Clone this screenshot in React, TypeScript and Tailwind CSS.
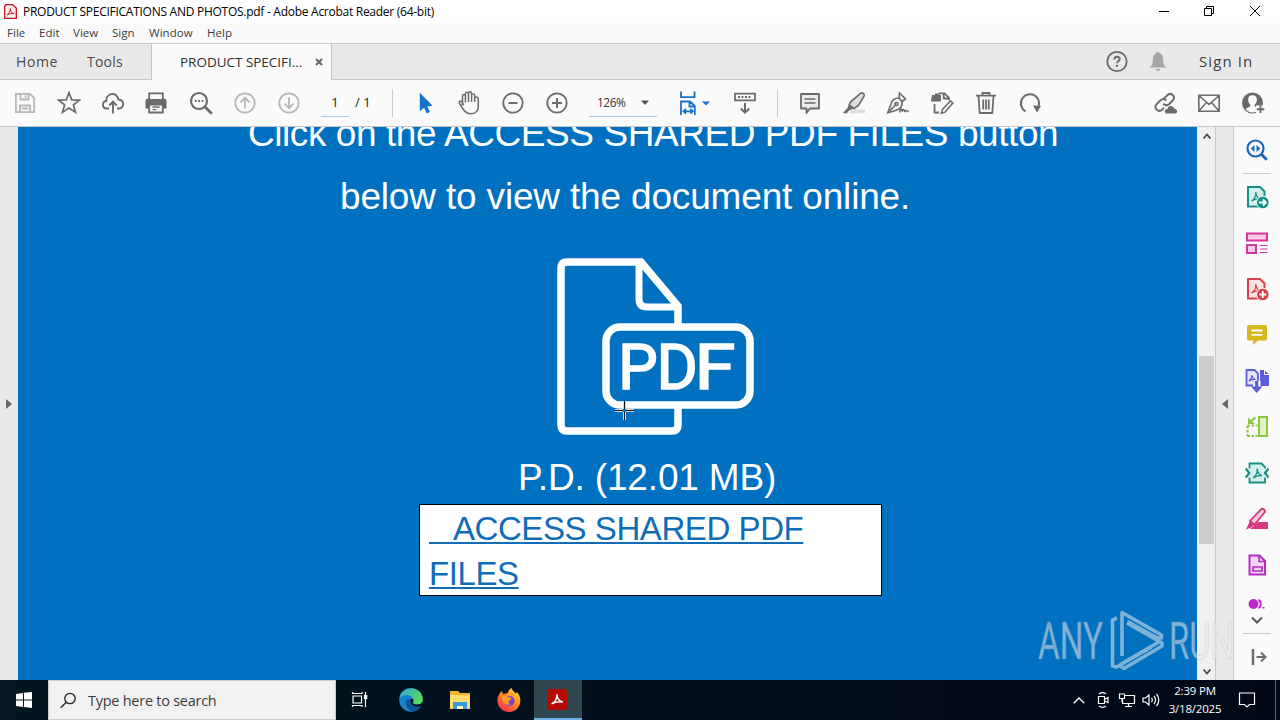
import type { ReactNode } from "react";

import clsx from "clsx";

const GREY = "#6b6b6b";
const PALE = "#b7b7b7";
const BLUE = "#1473c8";

interface IconProps {
  children: ReactNode;
  size?: number;
  color?: string;
  width?: number;
  className?: string;
}

/// Outline icon on a 24px grid. Shapes that need a solid fill set it themselves.
function Icon({ children, size = 24, color = GREY, width = 1.8, className }: IconProps) {
  return (
    <svg
      width={size}
      height={size}
      viewBox="0 0 24 24"
      fill="none"
      stroke={color}
      strokeWidth={width}
      className={clsx("block shrink-0", className)}
    >
      {children}
    </svg>
  );
}

function Cell({ children }: { children: ReactNode }) {
  return <button className="flex h-full w-11 shrink-0 items-center justify-center">{children}</button>;
}

function AcrobatMark({ color, fill }: { color: string; fill: string }) {
  return (
    <>
      <path d="M3 2h12l4.500 4.500V21.500H3z" fill={fill} strokeWidth="2" />
      <path
        d="M6.500 16c2.500-1.500 4.500-5 4.300-9 .2 4 2 6.300 5 7-3.500-.5-6.500.3-9.300 2z"
        stroke={color}
        strokeWidth="1.200"
      />
    </>
  );
}

function TitleBar() {
  return (
    <div className="flex h-[23px] items-center bg-white">
      <svg width="13" height="15" viewBox="0 0 13 15" className="ml-1 shrink-0" fill="none">
        <path d="M2 .7h6.500L12.300 4v10.300H.7V2z" fill="#fff0f0" stroke="#c4161c" strokeWidth="1.300" />
        <path d="M3 11c1.800-1 3.300-3.600 3.300-6.500C6.500 7.600 8 9.200 10.300 9.600 7.800 9.300 5.300 9.700 3 11z" stroke="#c4161c" />
      </svg>
      <span className="ml-1.5 text-[12px] tracking-[-0.27px] whitespace-nowrap text-black">
        PRODUCT SPECIFICATIONS AND PHOTOS.pdf - Adobe Acrobat Reader (64-bit)
      </span>
      <div className="ml-auto flex items-center">
        <svg width="12" height="12" viewBox="0 0 12 12" stroke="#000" fill="none" className="mr-[33px] mb-0.5">
          <path d="M1 6.500h10" />
        </svg>
        <svg width="12" height="12" viewBox="0 0 12 12" stroke="#000" fill="none" className="mr-[34px] mb-0.5">
          <path d="M1.500 3.500h7v7h-7zM3.500 3.500v-2h7v7h-2" />
        </svg>
        <svg width="12" height="12" viewBox="0 0 12 12" stroke="#000" fill="none" className="mr-[19px] mb-0.5">
          <path d="M1 1l10 10M11 1L1 11" />
        </svg>
      </div>
    </div>
  );
}

function MenuBar() {
  return (
    <div className="flex h-5 items-center bg-[#fafafa] text-[11.500px] tracking-[0.02px] text-[#3c3c3c]">
      <span className="ml-[7px] w-8">File</span>
      <span className="w-[34px]">Edit</span>
      <span className="w-[39px]">View</span>
      <span className="w-[37px]">Sign</span>
      <span className="w-[58px]">Window</span>
      <span>Help</span>
    </div>
  );
}

function TabBar() {
  return (
    <div className="flex h-[37px] border-y border-[#c6c6c6] bg-[#e9e9e9] text-[14px] text-[#4a4a4a]">
      <div className="flex w-[151px] items-center">
        <span className="ml-4 w-[71px] tracking-[0.600px]">Home</span>
        <span className="tracking-[0.200px]">Tools</span>
      </div>
      <div className="-mb-px flex w-[181px] items-center border-x border-[#c6c6c6] bg-[#fafafa]">
        <span className="ml-7 text-[13.500px] tracking-[-0.02px] whitespace-nowrap text-[#2f2f2f]">
          PRODUCT SPECIFI...
        </span>
        <svg width="8" height="8" viewBox="0 0 8 8" stroke="#666" strokeWidth="2" className="mr-2 ml-auto">
          <path d="M1 1l6 6M7 1L1 7" />
        </svg>
      </div>
      <div className="ml-auto flex items-center pr-[25px]">
        <Icon>
          <circle cx="12" cy="11.500" r="9.700" />
          <path d="M9.300 9.500c0-3.600 5.400-3.500 5.400-.4 0 2-2.600 1.900-2.600 4.200" strokeWidth="2" />
          <path d="M12 14.800v2" strokeWidth="2.200" />
        </Icon>
        <Icon className="ml-[17px]" color="#a6a6a6">
          <path
            d="M12 2c1 0 1.400.6 1.400 1.300 2.500.7 3.700 2.600 3.700 5.200 0 5 1 7.300 3.400 9H3.500C6 15.800 6.900 13.500 6.900 8.500c0-2.600 1.200-4.500 3.700-5.200 0-.7.4-1.300 1.400-1.300zM9.800 19h4.400c0 1.300-1 2-2.200 2s-2.200-.7-2.200-2z"
            fill="#a6a6a6"
            stroke="none"
          />
        </Icon>
        <span className="ml-[29px] w-14 text-[15px] tracking-[1.100px] whitespace-nowrap text-[#3c3c3c]">Sign In</span>
      </div>
    </div>
  );
}

function Toolbar() {
  return (
    <div className="flex h-[47px] items-center border-b border-[#c6c6c6] bg-[#fafafa] pl-[3px]">
      <Cell>
        <Icon color={PALE}>
          <path d="M2.900 2.900h14L21.200 7v14.100H2.900zM7.500 3v5.500h8V3M12.500 4.500v2.500M7 21v-6.500h10V21M9 17.500h6" />
        </Icon>
      </Cell>
      <Cell>
        <Icon width={1.7}>
          <path d="M12 1.500l2.700 7.300 7.800.3-6.100 4.800 2.100 7.500-6.500-4.300-6.500 4.300 2.100-7.500L1.500 9.100l7.800-.3z" />
        </Icon>
      </Cell>
      <Cell>
        <Icon width={1.9}>
          <path d="M8 17.500H5.500C.8 17.300.8 10.500 5.300 10 5 1.500 16.500.5 17.300 8.500c6.300.5 6.300 8.700.7 9H16" />
          <path d="M12 22.500V11M8.300 14.500l3.700-3.800 3.700 3.800" />
        </Icon>
      </Cell>
      <Cell>
        <Icon className="-ml-0.5">
          <path d="M5 7V2h14v5M1.500 9l1.800-1.500h17.400L22.500 9v8.500H19V14H5v3.500H1.500z" fill={GREY} stroke="none" />
          <path d="M5.200 8V2.300h13.600V8" fill="#fafafa" />
          <path d="M5.200 13.500v8h13.600v-8z" fill="#fafafa" />
          <path d="M8.500 16h7M8.500 18.700h4" strokeWidth="1.300" />
        </Icon>
      </Cell>
      <Cell>
        <Icon>
          <circle cx="10" cy="10" r="8" strokeWidth="2.200" />
          <path d="M15.800 15.800l7 7" strokeWidth="2.800" />
          <path d="M5.800 10h1.800M9.200 10H11M12.600 10h1.800" strokeWidth="2" />
        </Icon>
      </Cell>
      <Cell>
        <Icon color={PALE}>
          <circle cx="12" cy="12" r="9.700" />
          <path d="M12 17.500V7M7.500 11.300L12 6.800l4.500 4.500" />
        </Icon>
      </Cell>
      <Cell>
        <Icon color={PALE}>
          <circle cx="12" cy="12" r="9.700" />
          <path d="M12 6.500V17M7.500 12.700l4.500 4.500 4.500-4.500" />
        </Icon>
      </Cell>
      <div className="ml-2.5 flex h-[27px] w-[28px] items-center justify-center border-b border-[#b5cbe2] text-[13px] text-[#222]">
        1
      </div>
      <span className="ml-[6px] w-9 text-[13px] whitespace-pre text-[#222]">/ 1</span>
      <div className="mr-[10px] ml-px h-7 w-px bg-[#c8ccd2]" />
      <Cell>
        <Icon>
          <path d="M6.800 1.800v18.500l4.400-3.700 2.500 5.900 3.200-1.400-2.600-5.700 5.300-.6z" fill={BLUE} stroke="none" />
        </Icon>
      </Cell>
      <Cell>
        <Icon width={1.5}>
          <path d="M5.500 14.500V5c0-2 2.900-2 2.900 0v6.500M8.400 10V3c0-2.200 3.100-2.200 3.100 0v8M11.500 8V2.500c0-2.200 3.100-2.200 3.100 0V11M14.600 9V4.500c0-2.200 3.100-2 3.100 0V11M17.700 10V7.500c.2-2 3.600-2 3.600.5v7.500c0 4.500-3 7.300-7.300 7.300-4.200 0-6.200-2-8-4.800l-3.800-6c-.5-2 1.500-2.400 2.500-1.200l2 3" />
        </Icon>
      </Cell>
      <Cell>
        <Icon>
          <circle cx="12" cy="12" r="9.700" />
          <path d="M7.500 12h9" strokeWidth="2" />
        </Icon>
      </Cell>
      <Cell>
        <Icon>
          <circle cx="12" cy="12" r="9.700" />
          <path d="M7 12h10M12 7v10" strokeWidth="2" />
        </Icon>
      </Cell>
      <div className="ml-[10px] flex h-[27px] w-[68px] items-center border-b border-[#a9c8ea] pl-2 text-[12px] tracking-[-0.5px] text-[#333]">
        <span>126%</span>
        <svg width="8" height="5" viewBox="0 0 8 5" className="mr-2 ml-auto">
          <path d="M0 .5h8L4 5z" fill="#555" />
        </svg>
      </div>
      <Icon className="ml-[19px]" color={BLUE} width={1.8}>
        <path d="M5 .5v5.600h13.500V.5M5 24V10.500h9l4.800 4.500V24M13.500 11v4.500h5M8.500 20.300h7.300M10 18l-2.500 2.300L10 22.500M14.300 18l2.500 2.300-2.500 2.200" />
      </Icon>
      <svg width="8" height="5" viewBox="0 0 8 5" className="ml-0.5">
        <path d="M0 .5h8L4 4.500z" fill={BLUE} />
      </svg>
      <Icon className="ml-[23px] mr-[20px]" width={1.8}>
        <path d="M2 2.700h20v6.600H2z" />
        <path d="M5 6h14" strokeWidth="2" strokeDasharray="2 1.500" />
        <path d="M12 12v9.500M7.800 17.500l4.200 4.200 4.200-4.200" strokeWidth="2" />
      </Icon>
      <div className="mr-[10px] h-7 w-px bg-[#c8ccd2]" />
      <Cell>
        <Icon>
          <path d="M3 3h18v14.500h-9L8.500 22v-4.500H3z" fill="#ebebeb" strokeLinejoin="round" />
          <path d="M6.500 8h11M6.500 12h11" strokeWidth="1.500" />
        </Icon>
      </Cell>
      <Cell>
        <Icon width={1.6}>
          <path d="M10 18.500h13v3.700H7z" fill="#dedede" stroke="none" />
          <path d="M18.500 2.300c2-1.300 4.500.6 3.500 2.800l-5.500 9.400-4.500 3-4.800-3.700 1.500-3z" fill="#dedede" />
          <path d="M7 13.500l5 3.800-4.800 2.200L4.500 22.500.8 22l4.700-5z" fill={GREY} stroke="none" />
        </Icon>
      </Cell>
      <Cell>
        <Icon width={1.6}>
          <path d="M13.500 2l6 6-3.300 2.500c.3 4.500-2.200 8-6.700 9l-7.700 2.300 3-8.300c1-4.500 4-6.500 8.200-6.500z" fill="#f2f2f2" />
          <path d="M2 21.500l7.500-7.500M13 7l3.500 4" />
          <circle cx="10.500" cy="13" r="1.500" />
          <path d="M13.500 21.500c1-4 3-4 2.500-1 1-3 3-2 2.500.5 1.500-2.500 2.500-1.500 4 0" />
        </Icon>
      </Cell>
      <Cell>
        <Icon>
          <path d="M2 4h3V2.500h4V4h2v6.500H.8z" fill={GREY} stroke="none" />
          <path d="M9 2.300h5.500l4.500 4.500v2.500M13.700 2.500v5H19M4.500 13v8.500h4.500" />
          <path d="M12.500 18.500L20.500 9.800l2.500 2.300-8 9-3.700 1.200z" fill="#fafafa" strokeWidth="1.500" />
        </Icon>
      </Cell>
      <Cell>
        <Icon>
          <path d="M2 4.700h20M8.500 4.500V2h7v2.500M4.500 5l1.200 17h12.600l1.200-17M9.200 8.500v10M12 8.500v10M14.800 8.500v10" />
        </Icon>
      </Cell>
      <Cell>
        <Icon width={2}>
          <path d="M7.500 20.500C2.500 17.500 1.600 11 4.700 7c4-5 11-4.800 14.500-.2 2.400 3.300 2.200 7 .6 9.900" />
          <path d="M15 14.500l8 .5-4 6.500z" fill={GREY} stroke="none" />
        </Icon>
      </Cell>
      <div className="ml-auto flex h-full pr-[5px]">
        <Cell>
          <Icon width={2}>
            <path d="M10.500 8l4-4c3.500-3 8.500 1.300 5.500 5.200l-4 4c-2 1.700-4.500 1.200-5.700-.5M13.300 9.500c-2-1.900-4.300-1.600-5.800-.2l-4 4c-3 3.700 1.700 8.600 5.500 5.500l2-2" />
            <path d="M14 22.500c-3 0-3-4.500.5-4.500.5-4 6-4 7 0 3.500 0 3.500 4.500.5 4.500z" fill={GREY} stroke="none" />
          </Icon>
        </Cell>
        <Cell>
          <Icon width={1.6}>
            <path d="M1.800 4.300h20.400v15.900H1.800zM2 4.500l10 9 10-9M2 20l7.500-8.500M22 20l-7.500-8.500" />
          </Icon>
        </Cell>
        <Cell>
          <Icon>
            <circle cx="11.500" cy="12" r="10.500" fill={GREY} stroke="none" />
            <path
              d="M11.500 4.300c-3 0-4.600 2-4.400 4.800.2 2 1 3.500 2.200 4.500v2c-1.700.7-3.700 1.500-4.700 2.600 3.500 3.800 9.500 4.300 12.900 1v-2.500l-3.800-1.300v-1.800c1.200-1 2-2.500 2.200-4.500.2-2.800-1.400-4.800-4.400-4.800z"
              fill="#fafafa"
              stroke="none"
            />
            <path d="M15 14.500h9V24h-9z" fill="#fafafa" stroke="none" />
            <path d="M19.500 14.500v7.500M15.700 18.200h7.600" strokeWidth="1.900" />
          </Icon>
        </Cell>
      </div>
    </div>
  );
}

function PdfDrawing() {
  return (
    <svg width="200" height="180" viewBox="555 256 200 180" fill="none" stroke="#fff" strokeWidth="7.500">
      <path d="M678 326v-20L641 262h-74q-6 0-6 6v157q0 6 6 6h105q6 0 6-6v-20" />
      <path d="M639 263v36q0 8 8 8h30" strokeWidth="7" />
      <rect x="606" y="327" width="144" height="78" rx="14" />
      <g fill="#fff" strokeWidth="1.600" fontSize="63" className="font-['Roboto',sans-serif]">
        <text x="618" y="389">
          P
        </text>
        <text x="656.500" y="389">
          D
        </text>
        <text x="694.500" y="389" textLength="41" lengthAdjust="spacingAndGlyphs">
          F
        </text>
      </g>
    </svg>
  );
}

function Document() {
  return (
    <div className="relative flex w-[1179px] shrink-0 flex-col items-start overflow-hidden bg-[#0070c0] font-['Liberation_Sans',Arial,sans-serif] text-[37px] text-white">
      <p className="-mt-6 ml-[230px] leading-[62px] tracking-[-0.43px] whitespace-nowrap">
        Click on the ACCESS SHARED PDF FILES button
      </p>
      <p className="mt-px ml-[322px] leading-[62px] tracking-[-0.17px] whitespace-nowrap">
        below to view the document online.
      </p>
      <div className="mt-7 ml-[537px]">
        <PdfDrawing />
      </div>
      <p className="mt-[21px] ml-[500px] leading-[42px] tracking-[-0.15px] whitespace-nowrap">P.D. (12.01 MB)</p>
      <div className="mt-[5px] ml-[401px] h-[92px] w-[463px] border border-black bg-white pt-px pl-[9px] text-[33px] leading-[45px] tracking-[-0.42px] text-[#0f6cb6]">
        <a className="block whitespace-nowrap underline decoration-2 underline-offset-2">
          <span className="tracking-[-1.200px]">&nbsp;&nbsp;&nbsp;</span>ACCESS SHARED PDF
          <br />
          FILES
        </a>
      </div>
      {/* crosshair cursor resting over the drawing */}
      <svg width="19" height="19" viewBox="0 0 19 19" className="absolute top-[274px] left-[597px]" fill="none">
        <path d="M9.500 0v8M9.500 11v8M0 9.500h8M11 9.500h8" stroke="#d8d8d8" strokeWidth="3" />
        <path d="M9.500 0v8M9.500 11v8M0 9.500h8M11 9.500h8" stroke="#111" />
      </svg>
    </div>
  );
}

function ScrollBar() {
  return (
    <div className="flex w-[19px] shrink-0 flex-col items-center border-r border-[#c9c9c9] bg-[#f0f0f0] pl-px">
      <svg width="10" height="18" viewBox="0 0 10 18" fill="none" stroke="#444" strokeWidth="1.800">
        <path d="M1.500 11.500L5 7.500l3.500 4" />
      </svg>
      <div className="mt-[211px] h-[188px] w-[15px] bg-[#cdcdcd]" />
      <svg width="10" height="18" viewBox="0 0 10 18" fill="none" stroke="#444" strokeWidth="1.800" className="mt-auto">
        <path d="M1.500 7.500l3.500 4 3.500-4" />
      </svg>
    </div>
  );
}

const TOOLS: { id: string; color: string; art: ReactNode }[] = [
  {
    id: "export",
    color: "#1a8f86",
    art: (
      <>
        <AcrobatMark color="#1a8f86" fill="#d5efec" />
        <circle cx="17.800" cy="17.500" r="6.300" fill="#1a8f86" stroke="#fafafa" strokeWidth="1" />
        <path d="M14 17.500h7M18 14.500l3 3-3 3" stroke="#fff" />
      </>
    ),
  },
  {
    id: "organize",
    color: "#d8349a",
    art: (
      <>
        <path d="M2 2.500h20v7H2zM2 14h9v8H2z" fill="#f8cbe6" strokeWidth="2" />
        <path d="M15 14.500h7.500M15 18h7.500M15 21.500h7.500" strokeWidth="1.200" />
      </>
    ),
  },
  {
    id: "create",
    color: "#d9424d",
    art: (
      <>
        <AcrobatMark color="#d9424d" fill="#fde2e2" />
        <circle cx="17.800" cy="17.500" r="6.300" fill="#d9424d" stroke="#fafafa" strokeWidth="1" />
        <path d="M14.300 17.500h7M17.800 14v7" stroke="#fff" />
      </>
    ),
  },
  {
    id: "comment",
    color: "#d8b91f",
    art: (
      <>
        <path d="M3.500 2h17q1.500 0 1.500 1.500v12.500q0 1.500-1.500 1.500H13L8 22v-4.500H3.500Q2 17.500 2 16V3.500Q2 2 3.500 2z" fill="#d8b91f" stroke="none" />
        <path d="M6.500 7.500h11M6.500 11.800h11" stroke="#fff" />
      </>
    ),
  },
  {
    id: "combine",
    color: "#5b5bdc",
    art: (
      <>
        <path d="M8 16.500H1.500V1h8L13 4.500V12" fill="#e4e4fb" />
        <path d="M4 12c2-1.500 3-3.500 3-6 .3 2.500 1.500 4 3.500 4.500C8 10.300 6 10.800 4 12z" strokeWidth="1.200" />
        <path d="M15 1h4.500L24 5.500V17h-8.500v-5H15z" fill="#5b5bdc" stroke="none" />
        <path d="M19.500.5v5H24" stroke="#fafafa" strokeWidth="1" />
        <path d="M11.700 12v7" strokeWidth="3.200" />
        <path d="M6 17.500h11.400L11.700 24z" fill="#5b5bdc" stroke="none" />
      </>
    ),
  },
  {
    id: "compare",
    color: "#8cc63e",
    art: (
      <>
        <path d="M14 2h8v19h-8z" fill="#e1f3c4" strokeWidth="2" />
        <path d="M2.500 10.500h10M2.500 21h10M2.500 11v10" strokeDasharray="2.500 1.500" strokeWidth="2" />
        <path d="M10.500 2.500L5 7" strokeWidth="2.200" />
        <path d="M3 2.500V9h7z" fill="#8cc63e" stroke="none" />
      </>
    ),
  },
  {
    id: "compress",
    color: "#1a8f86",
    art: (
      <>
        <path d="M4.500 2.500h12l3.500 3.500v15H4.500z" fill="#d5efec" stroke="none" />
        <path d="M4.500 7.500v-5h12L20 6v1.500M4.500 16.500v5H20v-5" />
        <path d="M.8 7.500L4.300 12 .8 16.500M23.500 7.500L20 12l3.500 4.500" strokeWidth="2.200" />
        <path d="M8 17c3-2 4.500-5 4.300-9.500.3 4.500 2 6.500 4.700 7-3-.3-6 .5-9 2.500z" strokeWidth="1.400" />
      </>
    ),
  },
  {
    id: "redact",
    color: "#d93780",
    art: (
      <>
        <path d="M16 2.300c2-1.500 5 1 3.500 3.200l-10 12L5 14z" fill="#f8cbdd" />
        <path d="M5 14l4.500 3.500-3.500 3-5 2z" fill="#d93780" stroke="none" />
        <path d="M13 15h10v7H5z" fill="#d93780" stroke="none" />
      </>
    ),
  },
  {
    id: "form",
    color: "#b62cc2",
    art: (
      <>
        <path d="M4.500 2.500h10l5.500 5.500v13.500H4.500z" fill="#f1d5f5" strokeWidth="2" />
        <path d="M14 3v5.500h6M8 14h9v4H8z" strokeWidth="1.700" />
      </>
    ),
  },
];

function ToolsPanel() {
  return (
    <div className="flex w-[46px] shrink-0 flex-col items-center bg-[#fafafa]">
      <div className="flex h-[46px] items-center">
        <Icon color="#1b66b8" width={2.2}>
          <circle cx="10.500" cy="10.500" r="8" />
          <path d="M16.300 16.300l5.500 5.500" strokeWidth="3" />
          <path d="M9.500 7v7L5.700 10.500zM11.500 7v7l3.800-3.500z" fill="#1b66b8" stroke="none" />
        </Icon>
      </div>
      <div className="h-px w-7 bg-[#c8c8c8]" />
      {TOOLS.map((tool) => (
        <button key={tool.id} className="flex h-[46px] shrink-0 items-center">
          <Icon color={tool.color}>{tool.art}</Icon>
        </button>
      ))}
      <svg width="18" height="10" viewBox="0 0 18 10" className="mt-[11px] shrink-0">
        <circle cx="5.500" cy="5" r="5" fill="#b62cc2" />
        <path d="M10.500 1c3 1.500 3 6.500 0 8" stroke="#b62cc2" strokeWidth="2" fill="none" />
        <path d="M14.500 8h2v1.500h-2z" fill="#b62cc2" />
      </svg>
      <svg width="14" height="10" viewBox="0 0 14 10" fill="none" stroke="#555" strokeWidth="2" className="mt-[6px] shrink-0">
        <path d="M2 2.500l5 5 5-5" />
      </svg>
      <div className="mt-2 h-px w-7 shrink-0 bg-[#c8c8c8]" />
      <Icon className="mt-[11px] ml-1.5" width={2}>
        <path d="M5 4v16" strokeWidth="2.500" />
        <path d="M8.500 12h8M13 7.500l4.500 4.500-4.500 4.500" />
      </Icon>
    </div>
  );
}

function Watermark() {
  return (
    <svg
      width="210"
      height="76"
      viewBox="1034 604 210 76"
      fill="none"
      className="pointer-events-none absolute top-[604px] left-[1034px] opacity-55"
      stroke="#e4e8eb"
      strokeWidth="3.600"
      strokeLinejoin="round"
    >
      <g fill="#e8ebee" stroke="#9aa3aa" strokeWidth=".4" fontSize="51" fontWeight="400" className="font-['Roboto',sans-serif]">
        <text x="1038" y="659" textLength="65" lengthAdjust="spacingAndGlyphs">
          ANY
        </text>
        <text x="1169" y="659" textLength="65" lengthAdjust="spacingAndGlyphs">
          RUN
        </text>
      </g>
      <path d="M1117 618l-4.500 2v46l4 1 35-20" />
      <path d="M1122 656v-43.500l39.500 22.500v3h-4l-30-16.500" />
      <path d="M1127 623l35 20v3l-38 22.500-3-2 1-3 36-21" />
    </svg>
  );
}

function Taskbar() {
  return (
    <div className="flex h-10 items-center bg-linear-to-r from-[#02171e] to-[#020818] text-white">
      <div className="flex w-12 justify-center">
        <svg width="16" height="16" viewBox="0 0 16 16" fill="#fff">
          <path d="M0 2l7-1v6.500H0zM8 .8L16 0v7.500H8zM0 8.500h7V15l-7-1zM8 8.500h8V16l-8-1z" />
        </svg>
      </div>
      <div className="flex h-10 w-72 items-center border border-[#c9cccd] bg-[#f1f1f1] text-[#3c3c3c]">
        <svg width="17" height="17" viewBox="0 0 17 17" fill="none" stroke="#222" strokeWidth="1.300" className="ml-[11px]">
          <circle cx="10" cy="6.500" r="5.200" />
          <path d="M6.300 10.300L.8 15.800" />
        </svg>
        <span className="mt-px ml-[11px] text-[14.500px] tracking-[-0.26px]">Type here to search</span>
      </div>
      <div className="flex w-12 justify-center">
        <svg width="18" height="18" viewBox="0 0 18 18" fill="none" stroke="#fff" strokeWidth="1.200">
          <path d="M2 5h8.500v7H2zM1.500 1v1.500H11V1M1.500 16v-1.500H11V16M14.500 1v15" />
          <path d="M13.500 4.500h2.200v3h-2.200z" fill="#fff" />
        </svg>
      </div>
      <div className="ml-[3px] flex w-12 justify-center">
        <svg width="24" height="24" viewBox="0 0 24 24">
          <defs>
            <linearGradient id="edge-top" x1="0" y1="0" x2="1" y2=".5">
              <stop offset="0" stopColor="#27a9e0" />
              <stop offset="1" stopColor="#5bd85a" />
            </linearGradient>
          </defs>
          <circle cx="12" cy="12" r="11.800" fill="#1683cf" />
          <path d="M.5 10C2-3 23-3 23.800 11c0 4-3 5.500-6.500 5.500-3 0-4-1.500-3-3.500C14.500 6 5 5 .5 10z" fill="url(#edge-top)" />
          <path d="M8.500 11c-4.500 5.500.5 11.500 6 12.500 3-.5 6-2.500 7.500-5.500-5 2.500-11 0-10-6z" fill="#0d5396" />
          <path d="M11.500 11c2-1 4 .3 2.800 2.200-1 1.800 0 3.300 3.700 3.300 2.500 0 4.500-.8 5.500-2.500l.5 3-3 1.500c-5 1.500-10.500-2-9.500-7.500z" fill="#02171e" />
        </svg>
      </div>
      <div className="flex w-[49px] justify-center">
        <svg width="22" height="20" viewBox="0 0 22 20">
          <path d="M1 1h8l2 2h10v16H1z" fill="#f0b429" />
          <path d="M1 5h20v14H1z" fill="#ffdb70" />
          <path d="M4 12h14v7h-4v-3H8v3H4z" fill="#3b99dd" />
          <path d="M8 16h6v3H8z" fill="#fff3c4" />
        </svg>
      </div>
      <div className="flex w-[50px] justify-center">
        <svg width="24" height="24" viewBox="0 0 24 24">
          <defs>
            <linearGradient id="fox" x1="1" y1="0" x2=".2" y2="1">
              <stop offset="0" stopColor="#ffe14a" />
              <stop offset=".5" stopColor="#ff8a1f" />
              <stop offset="1" stopColor="#f0285c" />
            </linearGradient>
          </defs>
          <path d="M3 5l1.500-2 2 3L11 5c0-2 1.500-4 3.500-5 .5 2.500 3 3.500 4.500 5.500L20 4c7 7.500 2.500 20-8 20C2 24-3 13 3 5z" fill="url(#fox)" />
          <circle cx="12.500" cy="13" r="5" fill="#7d3fd6" />
          <path d="M5 8c3-1 5 0 7 1.500 2 0 3 1 1.500 2.500-2 .5-3 2.500 0 4.500C8 18 4 13 5 8z" fill="#ff9a26" />
        </svg>
      </div>
      <div className="flex h-10 w-12 items-center justify-center border-b-2 border-[#6cb2ea] bg-[#304650]">
        <svg width="20" height="21" viewBox="0 0 22 22" fill="none" preserveAspectRatio="none" className="mr-0.5 mt-px">
          <rect width="22" height="22" rx="3" fill="#b30b00" />
          <path d="M5 15.500c3.500-1.500 6-5.500 6-10 .2 5 2.500 7.500 6.500 8.200-4.500-.7-8.500 0-12.500 1.800z" stroke="#fff" strokeWidth="1.500" />
        </svg>
      </div>
      <div className="ml-auto flex items-center">
        <svg width="12" height="7" viewBox="0 0 12 7" fill="none" stroke="#fff" strokeWidth="1.300">
          <path d="M.7 6.300L6 1l5.300 5.300" />
        </svg>
        <svg width="14" height="16" viewBox="0 0 14 16" fill="none" stroke="#fff" strokeWidth="1.200" className="ml-[11px]">
          <path d="M2.500 4.500h6v7h-6zM8.500 7.500l3.500-2v5L8.500 9M3 2c2-1.500 5-1.500 7 0M3 14c2 1.500 5 1.500 7 0" />
        </svg>
        <svg width="18" height="16" viewBox="0 0 18 16" fill="none" stroke="#fff" strokeWidth="1.200" className="ml-2">
          <path d="M6 3.500h10.500v8H4.500V7M10.500 11.500v3M7 14.500h7M1.500 2h5v4.500h-5zM4 6.500V10" />
        </svg>
        <svg width="18" height="14" viewBox="0 0 18 14" fill="none" stroke="#fff" strokeWidth="1.200" className="ml-1.5">
          <path d="M1 5h2.500L7 2v10L3.500 9H1zM9.500 5c1 1 1 3 0 4M12 3c2 2 2 6 0 8M14.500 1c3 3 3 9 0 12" />
        </svg>
        <div className="ml-2 flex w-[54px] flex-col items-center text-[11.500px] leading-[18px] tracking-[-0.2px] whitespace-nowrap">
          <span>2:39 PM</span>
          <span>3/18/2025</span>
        </div>
        <svg width="18" height="18" viewBox="0 0 18 18" fill="none" stroke="#fff" strokeWidth="1.200" className="ml-4">
          <path d="M1.500 2h15v11.500h-5L9 16l-2.500-2.500h-5z" />
        </svg>
        <div className="ml-[19px] h-10 w-px bg-[#5a6070]" />
        <div className="w-1" />
      </div>
    </div>
  );
}

export default function App() {
  return (
    <div className="relative flex h-[720px] w-[1280px] flex-col overflow-hidden font-['Open_Sans','Noto_Sans',sans-serif]">
      <TitleBar />
      <MenuBar />
      <TabBar />
      <Toolbar />
      <div className="flex min-h-0 flex-1">
        <div className="flex w-[18px] shrink-0 items-center justify-center bg-[#e9e9e9]">
          <svg width="6" height="10" viewBox="0 0 6 10" fill="#666">
            <path d="M0 0l6 5-6 5z" />
          </svg>
        </div>
        <Document />
        <ScrollBar />
        <div className="flex w-[18px] shrink-0 items-center justify-center border-r border-[#c9c9c9] bg-[#e9e9e9]">
          <svg width="6" height="10" viewBox="0 0 6 10" fill="#666">
            <path d="M6 0L0 5l6 5z" />
          </svg>
        </div>
        <ToolsPanel />
      </div>
      <Taskbar />
      <Watermark />
    </div>
  );
}
